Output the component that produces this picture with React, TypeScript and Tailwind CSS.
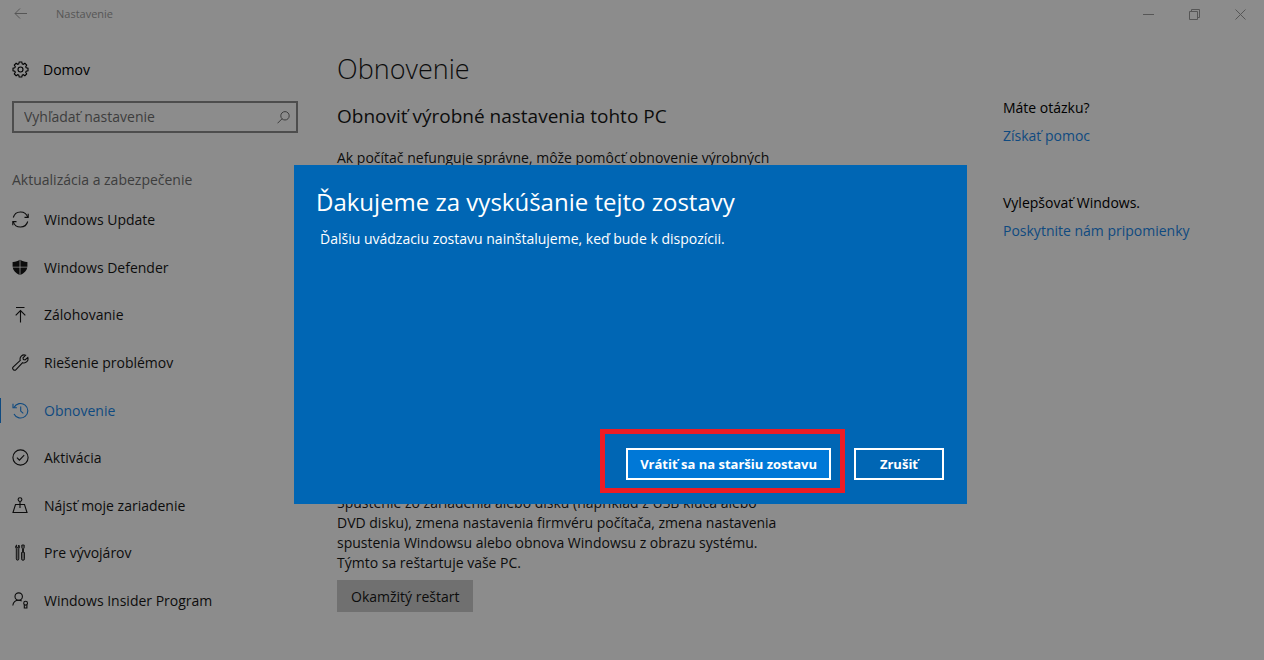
import React from 'react';

interface NavItemProps {
  label: string;
  icon: React.ReactNode;
  active?: boolean;
}

const Icon: React.FC<{ children: React.ReactNode }> = ({ children }) => (
  <svg
    viewBox="0 0 17 17"
    className="w-[17px] h-[17px] shrink-0"
    fill="none"
    stroke="currentColor"
    strokeWidth="1.1"
    aria-hidden="true"
  >
    {children}
  </svg>
);

const GearIcon = () => (
  <Icon>
    <path d="M7.200 1h2.600l.4 1.800 1.100.5 1.600-1 1.800 1.800-1 1.600.5 1.100 1.800.4v2.600l-1.800.4-.5 1.100 1 1.600-1.800 1.800-1.600-1-1.100.5-.4 1.800H7.200l-.4-1.800-1.100-.5-1.600 1-1.800-1.800 1-1.600-.5-1.100L1 9.800V7.200l1.800-.4.5-1.100-1-1.600 1.800-1.800 1.600 1 1.100-.5z" />
    <circle cx="8.500" cy="8.500" r="2.500" />
  </Icon>
);

const navItems: NavItemProps[] = [
  {
    label: 'Windows Update',
    icon: (
      <Icon>
        <path d="M1.300 6.500A7.500 7.500 0 0 1 15.700 6.200M15.700 10.500A7.500 7.500 0 0 1 1.300 10.800" />
        <path d="M16.200 2.700v3.700h-3.700M.8 14.300v-3.700h3.700" />
      </Icon>
    ),
  },
  {
    label: 'Windows Defender',
    icon: (
      <Icon>
        <path
          d="M7.600.8v7H.6V2.900C3.400 3 5.700 2.300 7.600.8zM8.400.8c1.900 1.500 4.200 2.200 7 2.100v4.900h-7zM.7 8.600h6.900V16C3.700 14.300 1.300 12 .7 8.600zM8.400 8.600h6.900C14.700 12 12.300 14.300 8.400 16z"
          fill="currentColor"
          stroke="none"
        />
      </Icon>
    ),
  },
  {
    label: 'Zálohovanie',
    icon: (
      <Icon>
        <path d="M4 1.500h8.500M8.500 16.500V4.500M3.700 9.300l4.800-4.800 4.800 4.800" />
      </Icon>
    ),
  },
  {
    label: 'Riešenie problémov',
    icon: (
      <Icon>
        <path d="M13.600 1.200a4.100 4.100 0 0 0-5.300 5.200L1.300 12.900a1.850 1.850 0 0 0 2.700 2.700l6.600-6.900a4.100 4.100 0 0 0 5.200-5.200l-2.800 2.500-1.600-.4-.4-1.600z" />
      </Icon>
    ),
  },
  {
    label: 'Obnovenie',
    active: true,
    icon: (
      <Icon>
        <path d="M2 5.500A7.300 7.300 0 1 1 2 12" />
        <path d="M1 1.800v3.900h3.900M8.700 4.500v4.600l2.600 2.300" />
      </Icon>
    ),
  },
  {
    label: 'Aktivácia',
    icon: (
      <Icon>
        <circle cx="8.500" cy="8.500" r="7.600" />
        <path d="M4.900 8.700l2.500 2.500 4.800-5" />
      </Icon>
    ),
  },
  {
    label: 'Nájsť moje zariadenie',
    icon: (
      <Icon>
        <circle cx="8" cy="2.600" r="1.900" />
        <path d="M8 4.500v6.500M3.500 7.500h9L15 15.500H1z" />
      </Icon>
    ),
  },
  {
    label: 'Pre vývojárov',
    icon: (
      <Icon>
        <path
          d="M4.600 1v2.400h2V1c1.200.6 1.300 2.700.2 3.700v10.200a1.250 1.250 0 0 1-2.500 0V4.700c-1.100-1-1-3.100.3-3.700zM9.800 1h2.400v2.700l-.7 1.200v3.600h1v6.300a1.500 1.500 0 0 1-3 0V8.500h1V4.900l-.7-1.200z"
          fill="currentColor"
          fillOpacity="0.4"
          strokeWidth="0.9"
        />
      </Icon>
    ),
  },
  {
    label: 'Windows Insider Program',
    icon: (
      <Icon>
        <circle cx="6.700" cy="4.600" r="3.700" />
        <path d="M.8 13.500c.4-3.200 2.500-5.200 5.900-5.200 1.300 0 2.200.2 3 .7" />
        <circle cx="13.600" cy="11.200" r="1.900" />
        <path d="M12.300 12.700v3.300h2.600v-3.300" />
      </Icon>
    ),
  },
];

const NavItem: React.FC<NavItemProps> = ({ label, icon, active }) => (
  <li className="flex-1 flex">
    <a
      href="#"
      aria-current={active ? 'page' : undefined}
      className={`relative flex-1 flex items-center gap-[15px] pl-3 ${active ? 'text-[#0f4a80]' : 'text-[#0c0c0c]'}`}
    >
      {active && <span className="absolute left-0 h-[25px] w-px bg-[#0f4a80]" />}
      {icon}
      {label}
    </a>
  </li>
);

const TitleBar = () => (
  <header className="flex items-center h-7 text-[#565656]">
    <button aria-label="Späť" className="pl-[14px] pr-7">
      <svg viewBox="0 0 14 12" className="w-[14px] h-3" fill="none" stroke="currentColor">
        <path d="M13 5.500H1M6 .5L1 5.500l5 5" />
      </svg>
    </button>
    <span className="flex-1 text-[11px]">Nastavenie</span>
    <div className="flex gap-[35px] pr-[18px]">
      <button aria-label="Minimalizovať">
        <svg viewBox="0 0 11 11" className="w-[11px] h-[11px]" stroke="currentColor">
          <path d="M0 5.500h11" />
        </svg>
      </button>
      <button aria-label="Obnoviť">
        <svg viewBox="0 0 11 11" className="w-[11px] h-[11px]" fill="none" stroke="currentColor">
          <path d="M.5 2.500h8v8h-8zM2.500 2.500v-2h8v8h-2" />
        </svg>
      </button>
      <button aria-label="Zavrieť">
        <svg viewBox="0 0 11 11" className="w-[11px] h-[11px]" stroke="currentColor">
          <path d="M.5.5l10 10M10.500.5l-10 10" />
        </svg>
      </button>
    </div>
  </header>
);

const Sidebar = () => (
  <aside className="w-[298px] shrink-0 flex flex-col pb-9">
    <a href="#" className="flex items-center gap-[14px] pl-3 h-12 mt-[17px] text-black">
      <GearIcon />
      Domov
    </a>
    <label className="flex items-center h-8 ml-3 mt-2 pl-[10px] pr-[6px] border-2 border-[#4d4d4d] text-[#3d3d3d]">
      <input
        type="search"
        aria-label="Vyhľadať nastavenie"
        placeholder="Vyhľadať nastavenie"
        className="flex-1 min-w-0 h-5 mb-px bg-transparent outline-none placeholder:text-[#3d3d3d]"
      />
      <svg viewBox="0 0 13 13" className="w-[13px] h-[13px]" fill="none" stroke="currentColor">
        <circle cx="8" cy="4.800" r="4.200" />
        <path d="M5 7.800L.5 12.300" />
      </svg>
    </label>
    <h2 className="pl-3 mt-[37px] leading-5 text-[#3d3d3d]">Aktualizácia a zabezpečenie</h2>
    <ul className="flex-1 flex flex-col mt-[6px]">
      {navItems.map((item) => (
        <NavItem key={item.label} {...item} />
      ))}
    </ul>
  </aside>
);

const Content = () => (
  <main className="flex-1 ml-[39px] mr-8 text-[#0c0c0c]">
    <h1 className="mt-[21px] text-[27px] leading-10 font-light">Obnovenie</h1>
    <section className="mt-[11px]">
      <h2 className="text-[19px] leading-8">Obnoviť výrobné nastavenia tohto PC</h2>
      <p className="mt-4 max-w-[460px] leading-5">
        Ak počítač nefunguje správne, môže pomôcť obnovenie výrobných
      </p>
    </section>
    <section className="mt-[325px]">
      <p className="max-w-[460px] leading-5">
        Spustenie zo zariadenia alebo disku (napríklad z USB kľúča alebo
        <br />
        DVD disku), zmena nastavenia firmvéru počítača, zmena nastavenia
        <br />
        spustenia Windowsu alebo obnova Windowsu z obrazu systému.
        <br />
        Týmto sa reštartuje vaše PC.
      </p>
      <button className="mt-[7px] h-8 px-[14px] bg-[#707070]">Okamžitý reštart</button>
    </section>
  </main>
);

const HelpPanel = () => (
  <aside className="w-[261px] shrink-0 pt-[66px] leading-7">
    <p className="text-black">Máte otázku?</p>
    <a href="#" className="block text-[#0f4a80]">Získať pomoc</a>
    <p className="mt-[39px] text-black">Vylepšovať Windows.</p>
    <a href="#" className="block text-[#0f4a80]">Poskytnite nám pripomienky</a>
  </aside>
);

const Dialog = () => (
  <div className="absolute inset-0 flex items-center justify-center pt-[9px] pr-[3px]">
    <div
      role="dialog"
      aria-labelledby="dialog-title"
      className="flex flex-col w-[673px] min-h-[339px] bg-[#0066b4] text-white pt-[17px] px-[22px] pb-[11px]"
    >
      <h2 id="dialog-title" className="text-[24px] leading-10">
        Ďakujeme za vyskúšanie tejto zostavy
      </h2>
      <p className="pl-1 mt-[7px] leading-5">
        Ďalšiu uvádzaciu zostavu nainštalujeme, keď bude k dispozícii.
      </p>
      <div className="flex items-center justify-end gap-[9px] mt-auto mr-px text-[13px] font-bold">
        <div className="border-[5px] border-[#ec1c24] pt-[14px] pr-[9px] pb-2 pl-[21px]">
          <button className="block h-8 px-3 pt-px border-2 border-white bg-[#0078d7]">
            Vrátiť sa na staršiu zostavu
          </button>
        </div>
        <button className="h-8 px-6 pt-px mt-[6px] border-2 border-white">Zrušiť</button>
      </div>
    </div>
  </div>
);

const App: React.FC = () => (
  <div className="relative min-h-screen flex flex-col bg-[#8c8c8c] font-['Open_Sans','Noto_Sans',sans-serif] text-[14px]">
    <TitleBar />
    <div className="flex-1 flex">
      <Sidebar />
      <Content />
      <HelpPanel />
    </div>
    <Dialog />
  </div>
);

export default App;
